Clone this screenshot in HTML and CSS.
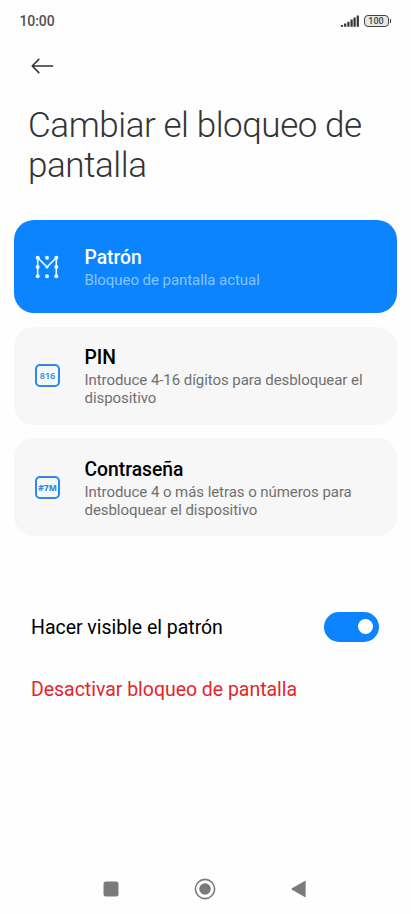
FILE: index.html
```
<!DOCTYPE html>
<html lang="es">
<head>
    <meta charset="UTF-8">
    <meta name="viewport" content="width=device-width, initial-scale=1.0">
    <title>Cambiar el bloqueo de pantalla</title>
    <link rel="stylesheet" href="styles.css">
</head>
<body>
    <div class="container">
        <header class="status-bar">
            <span class="clock">10:00</span>
            <div class="status-icons">
                <svg class="signal" width="20" height="14" viewBox="0 0 20 14">
                    <path d="M2 12.8V11M5.2 12.8V9.6M8.4 12.8V7.8M11.6 12.8V5.6M14.6 12.8V3.6M17.8 12.8V1.6"/>
                </svg>
                <div class="battery"><span>100</span></div>
            </div>
        </header>

        <button class="back-btn" aria-label="Atrás">
            <svg width="24" height="16" viewBox="0 0 24 16">
                <path d="M22.6 8H2.2M8.8 1.4L2.2 8l6.6 6.6"/>
            </svg>
        </button>

        <h1>Cambiar el bloqueo de pantalla</h1>

        <section class="lock-list">
            <div class="lock-item active">
                <svg class="lock-icon" width="26" height="26" viewBox="0 0 26 26">
                    <path class="pattern-line" d="M3.7 22.3V3.7L13 13l9.3-9.3v18.6"/>
                    <g class="pattern-dots">
                        <circle cx="3.7" cy="3.7" r="2"/>
                        <circle cx="13" cy="3.7" r="2"/>
                        <circle cx="22.3" cy="3.7" r="2"/>
                        <circle cx="3.7" cy="13" r="2"/>
                        <circle cx="13" cy="13" r="1.6"/>
                        <circle cx="22.3" cy="13" r="2"/>
                        <circle cx="3.7" cy="22.3" r="2"/>
                        <circle cx="13" cy="22.3" r="2"/>
                        <circle cx="22.3" cy="22.3" r="2"/>
                    </g>
                </svg>
                <div class="lock-txt">
                    <h2>Patrón</h2>
                    <p>Bloqueo de pantalla actual</p>
                </div>
            </div>
            <div class="lock-item">
                <div class="key-icon">816</div>
                <div class="lock-txt">
                    <h2>PIN</h2>
                    <p>Introduce 4-16 dígitos para desbloquear el dispositivo</p>
                </div>
            </div>
            <div class="lock-item">
                <div class="key-icon bold">#7M</div>
                <div class="lock-txt">
                    <h2>Contraseña</h2>
                    <p>Introduce 4 o más letras o números para desbloquear el dispositivo</p>
                </div>
            </div>
        </section>

        <section class="options">
            <div class="option">
                <span>Hacer visible el patrón</span>
                <div class="switch"></div>
            </div>
            <div class="option danger">Desactivar bloqueo de pantalla</div>
        </section>

        <nav class="nav-bar">
            <svg width="16" height="16" viewBox="0 0 16 16"><rect x="0.5" y="0.5" width="15" height="15" rx="2.5"/></svg>
            <svg width="22" height="22" viewBox="0 0 22 22">
                <circle class="ring" cx="11" cy="11" r="9.6"/>
                <circle cx="11" cy="11" r="5.8"/>
            </svg>
            <svg width="16" height="18" viewBox="0 0 16 18"><path d="M14.6.6v16.8L.6 9.6V8.4z"/></svg>
        </nav>
    </div>
</body>
</html>
```
FILE: styles.css
```
*{margin:0; padding:0; box-sizing: border-box}
body{background: #fefefe; color: #000; font-family: Roboto, "Liberation Sans", sans-serif;}
svg{display: block; flex: none;}
.container{display: flex; flex-direction: column; height: 914px;}

.status-bar{display: flex; justify-content: space-between; align-items: center; height: 42px; padding: 0 22.5px 0 19.5px;}
.clock{font-size: 14px; font-weight: 500; letter-spacing: -0.1px; color: #505050;}
.status-icons{display: flex; align-items: center; gap: 4px;}
.signal path{stroke: #333; stroke-width: 2.2; fill: none;}
.battery{position: relative; width: 25px; height: 12px; border: 1px solid #444; border-radius: 4px; background: #e8e8e8; color: #444; font-size: 9px; font-weight: 500; line-height: 11px; text-align: center;}
.battery::after{content: ""; position: absolute; right: -3px; top: 3px; width: 1px; height: 4px; background: #444;}

.back-btn{align-self: flex-start; height: 24px; margin: 11.5px 0 0 30px; border: 0; background: none;}
.back-btn path{fill: none; stroke: #333; stroke-width: 1.6; stroke-linecap: round; stroke-linejoin: round;}

h1{margin: 28.5px 20px 0 28px; font-size: 35px; font-weight: 300; line-height: 40px; letter-spacing: -0.43px; color: #333;}

.lock-list{display: flex; flex-direction: column; gap: 13.5px; margin: 34px 14px 0;}
.lock-item{display: flex; align-items: center; height: 98px; padding: 0 20px; border-radius: 20px; background: #f7f7f7;}
.lock-item.active{height: 93px; background: #0d84ff; color: #fff;}
.lock-txt{flex: 1; margin-left: 24.5px; padding-top: 3px;}
.lock-txt h2{margin-bottom: 2px; font-size: 19.3px; font-weight: 500; line-height: 24px;}
.lock-txt p{font-size: 15px; line-height: 17.6px; letter-spacing: -0.06px; color: #707070;}
.active .lock-txt p{color: #86c5ff;}
.pattern-line{fill: none; stroke: #e8fbff; stroke-width: 1.6;}
.pattern-dots{fill: #e8fbff;}
.key-icon{width: 25px; height: 23px; margin: 0 0 0 1px; border: 2px solid #2c8bea; border-radius: 5px; color: #2c8bea; font: 600 9px/19px "Noto Sans", sans-serif; text-align: center;}
.key-icon.bold{font-weight: 800; font-size: 8.5px;}

.options{margin: 59.5px 32px 0 31px;}
.option{display: flex; justify-content: space-between; align-items: center; height: 62px; font-size: 19.5px; letter-spacing: -0.03px;}
.option span{padding-top: 1px;}
.danger{padding-top: 1px; color: #e3262b;}
.switch{display: flex; justify-content: flex-end; align-items: center; width: 55px; height: 30px; padding-right: 6px; border-radius: 15px; background: #0d84ff;}
.switch::after{content: ""; width: 15px; height: 15px; border-radius: 50%; background: #fff;}

.nav-bar{display: flex; justify-content: space-between; align-items: center; height: 50px; margin: auto 104px 0 103px; fill: #7a7a7a;}
.ring{fill: none; stroke: #7a7a7a; stroke-width: 1.6;}
```
